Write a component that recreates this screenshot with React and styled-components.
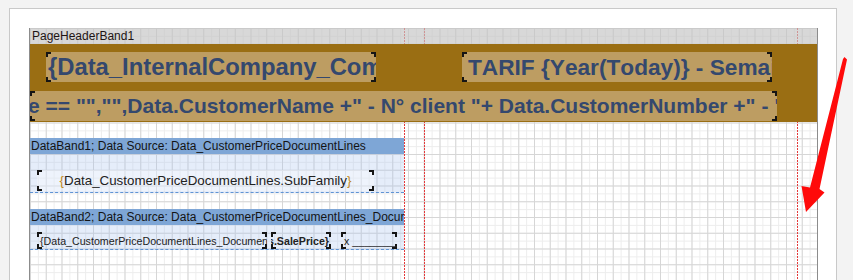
import React from 'react';
import styled, { createGlobalStyle, css } from 'styled-components';

/*
 report designer canvas : page header band with the company / tarif titles,
 then two data bands with their text components and the column guides .
*/

const GlobalStyle = createGlobalStyle`
  html, body {
    margin: 0;
    padding: 0;
    background: #f3f3f3;
  }
  body {
    font-family: "Liberation Sans", Arial, sans-serif;
    font-kerning: none;
    overflow: hidden;
  }
`;

// the little black L marks on each corner of a selected component
const corners = (c = '#151515', l = 5, w = 2) => css`
  background-image:
    linear-gradient(${c}, ${c}), linear-gradient(${c}, ${c}),
    linear-gradient(${c}, ${c}), linear-gradient(${c}, ${c}),
    linear-gradient(${c}, ${c}), linear-gradient(${c}, ${c}),
    linear-gradient(${c}, ${c}), linear-gradient(${c}, ${c});
  background-size:
    ${w}px ${l}px, ${l}px ${w}px, ${w}px ${l}px, ${l}px ${w}px,
    ${w}px ${l}px, ${l}px ${w}px, ${w}px ${l}px, ${l}px ${w}px;
  background-position:
    left top, left top, right top, right top,
    left bottom, left bottom, right bottom, right bottom;
  background-repeat: no-repeat;
`;

const Workspace = styled.div`
  position: relative;
  height: 280px;
  box-sizing: border-box;
  padding: 8px 0 0 9px;
  overflow: hidden;
`;

const Page = styled.div`
  width: 828px;
  height: 320px;
  box-sizing: border-box;
  background: #fff;
  border: 1px solid #c9c9c9;
  padding: 19px 18px 0 19px;
`;

const Design = styled.div`
  width: 789px;
  height: 400px;
  box-sizing: border-box;
  border-left: 1px solid #8c8c8c;
  border-right: 1px solid #8c8c8c;
  background-color: #fff;
  background-image:
    linear-gradient(to bottom, #e43a3a 60%, transparent 60%),
    linear-gradient(to bottom, #e43a3a 60%, transparent 60%),
    linear-gradient(to bottom, #e43a3a 60%, transparent 60%),
    linear-gradient(to right, #d6d6d6 1px, transparent 1px),
    linear-gradient(to bottom, #d6d6d6 1px, transparent 1px),
    linear-gradient(to right, #ededed 1px, transparent 1px),
    linear-gradient(to bottom, #ededed 1px, transparent 1px);
  background-size:
    1px 3px, 1px 3px, 1px 3px,
    15.75px 100%, 100% 15.75px, 7.875px 100%, 100% 7.875px;
  background-position:
    374px 0, 394px 0, 767px 0,
    0 0, 0 0, 0 0, 0 0;
  background-repeat: repeat-y, repeat-y, repeat-y, repeat, repeat, repeat, repeat;
`;

const BandCaption = styled.div`
  height: 16px;
  line-height: 16px;
  padding-left: 2px;
  font-size: 12px;
  color: #1e1414;
  background: rgba(196, 196, 196, 0.66);
  white-space: nowrap;
`;

const HeaderBand = styled.div`
  height: 78px;
  box-sizing: border-box;
  padding-top: 8px;
  background: #9a6e13;
  display: flex;
  flex-direction: column;
  gap: 9px;
`;

const TitleRow = styled.div`
  display: flex;
  gap: ${p => p.$gap || 0}px;
  padding-left: ${p => p.$indent || 0}px;
`;

const TitleBox = styled.div`
  width: ${p => p.$w}px;
  height: 30px;
  box-sizing: border-box;
  padding-left: ${p => p.$pad || 0}px;
  line-height: 30px;
  font-size: ${p => p.$size}px;
  font-weight: bold;
  color: #34486e;
  white-space: nowrap;
  overflow: hidden;
  text-indent: ${p => p.$indent || 0}px;
  background-color: #bd9d62;
  ${corners()}
`;

const Spacer = styled.div`
  height: ${p => p.$h}px;
`;

const DataTitle = styled.div`
  width: 374px;
  height: 16px;
  line-height: 16px;
  padding-left: 1px;
  box-sizing: border-box;
  font-size: 12px;
  color: #141414;
  background: #7ea6d6;
  white-space: nowrap;
  overflow: hidden;
`;

const DataBody = styled.div`
  width: 374px;
  height: ${p => p.$h}px;
  box-sizing: border-box;
  padding: ${p => p.$top}px 0 0 7px;
  background: rgba(168, 196, 238, 0.3);
  border-bottom: 1px dashed #5f93d4;
  display: flex;
  gap: ${p => p.$gap || 0}px;
`;

const Field = styled.div`
  flex: none;
  width: ${p => p.$w}px;
  height: ${p => p.$h}px;
  box-sizing: border-box;
  margin-left: ${p => p.$offset || 0}px;
  padding: 0 ${p => p.$padR || 0}px 0 ${p => p.$padL || 0}px;
  display: flex;
  align-items: center;
  justify-content: ${p => p.$align || 'flex-start'};
  font-size: ${p => p.$size}px;
  font-weight: ${p => (p.$bold ? 'bold' : 'normal')};
  color: #222;
  white-space: nowrap;
  overflow: hidden;
  background-color: ${p => p.$bg || 'transparent'};
  ${corners('#151515', 5, 2)}
`;

const Brace = styled.span`
  color: #c48b1c;
`;

const Arrow = styled.svg`
  position: absolute;
  left: 0;
  top: 0;
  pointer-events: none;
`;

export default function App() {
  return (
    <>
      <GlobalStyle />
      <Workspace>
        <Page>
          <Design>
            <BandCaption>PageHeaderBand1</BandCaption>
            <HeaderBand>
              <TitleRow $indent={16} $gap={86}>
                <TitleBox $w={330} $pad={2} $size={23.8}>
                  {'{Data_InternalCompany_CompanyName}'}
                </TitleBox>
                <TitleBox $w={310} $pad={6} $size={22.67}>
                  {'TARIF {Year(Today)} - Semaine {WeekOfYear(Today)}'}
                </TitleBox>
              </TitleRow>
              <TitleRow>
                <TitleBox $w={747} $size={21} $indent={-2}>
                  {'e == "","",Data.CustomerName +" - N° client "+ Data.CustomerNumber +" - "+ Data.CustomerCity)}'}
                </TitleBox>
              </TitleRow>
            </HeaderBand>
            <Spacer $h={16} />
            <DataTitle>DataBand1; Data Source: Data_CustomerPriceDocumentLines</DataTitle>
            <DataBody $h={39} $top={16}>
              <Field $w={337} $h={21} $size={13.33} $align="center" $bg="rgba(255,255,255,0.35)">
                <Brace>{'{'}</Brace>Data_CustomerPriceDocumentLines.SubFamily<Brace>{'}'}</Brace>
              </Field>
            </DataBody>
            <Spacer $h={16} />
            <DataTitle>DataBand2; Data Source: Data_CustomerPriceDocumentLines_Documents</DataTitle>
            <DataBody $h={25} $top={7} $gap={4}>
              <Field $w={230} $h={17} $size={10.67} $padL={3}>
                {'{Data_CustomerPriceDocumentLines_Documents.Designation}'}
              </Field>
              <Field $w={60} $h={17} $size={10.67} $bold $align="flex-end" $padR={2}>
                {'{Data_CustomerPriceDocumentLines_Documents.SalePrice}'}
              </Field>
              <Field $w={56} $h={17} $size={10.67} $padL={3} $offset={6}>
                x ________
              </Field>
            </DataBody>
          </Design>
        </Page>
        <Arrow width="853" height="280" viewBox="0 0 853 280">
          <polygon
            points="844.5,57 847,59.5 819.5,189 824.5,192.5 806,212 801.5,186 810,187.5 843,59"
            fill="#ff0a0a"
          />
        </Arrow>
      </Workspace>
    </>
  );
}
